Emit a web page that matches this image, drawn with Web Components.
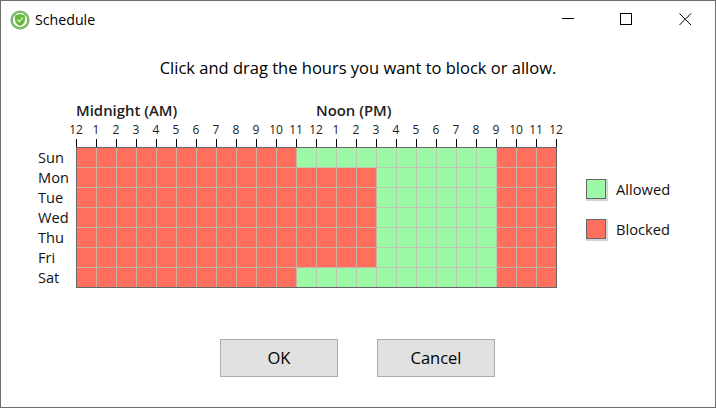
<!DOCTYPE html>
<html>
<head>
<meta charset="utf-8">
<title>Schedule</title>
<style>
html,body{margin:0;padding:0;background:#fff;}
body{font-family:"Open Sans","Noto Sans","Liberation Sans",sans-serif;color:#000;overflow:hidden;}
</style>
</head>
<body>
<sched-window caption="Schedule">
    <sched-grid></sched-grid>
    <dialog-button slot="buttons">OK</dialog-button>
    <dialog-button slot="buttons">Cancel</dialog-button>
</sched-window>

<script>
class WindowButton extends HTMLElement {
    constructor() {
        super();
        const icons = {
            min: '<path d="M0 5.5H12"/>',
            max: '<rect x="0.5" y="0.5" width="11" height="11"/>',
            close: '<path d="M0.5 0.5L12 12M12 0.5L0.5 12"/>'
        };
        this.attachShadow({ mode: 'open' }).innerHTML = `
        <style>
        :host{ display:flex; align-items:center; justify-content:center; width:58px; height:37px; }
        svg{ width:13px; height:13px; fill:none; stroke:#000; stroke-width:1; margin:0 0 1px 1px; }
        </style>
        <svg viewBox="0 0 13 13">${icons[this.getAttribute('kind')]}</svg>`;
    }
}
customElements.define('window-button', WindowButton);

class TitleBar extends HTMLElement {
    constructor() {
        super();
        this.attachShadow({ mode: 'open' }).innerHTML = `
        <style>
        :host{ display:flex; align-items:center; height:37px; padding-left:9px; }
        svg{ width:20px; height:20px; margin-right:5px; flex:none; }
        #caption{ flex:1; font-size:14.2px; line-height:37px; }
        #close{ margin-left:1px; margin-right:1px; }
        </style>
        <svg viewBox="0 0 20 20">
            <circle cx="10" cy="10" r="8.4" fill="#f4faf0" stroke="#7cb763" stroke-width="2.4"/>
            <path d="M10 3.9L15 5.5V9.4C15 12.5 12.8 14.8 10 16C7.2 14.8 5 12.5 5 9.4V5.5Z" fill="#66b83f"/>
            <path d="M7.3 9.6L9.4 11.6L12.8 7.6" fill="none" stroke="#dff2d4" stroke-width="1.3"/>
        </svg>
        <span id="caption"><slot></slot></span>
        <window-button kind="min"></window-button>
        <window-button kind="max"></window-button>
        <window-button kind="close" id="close"></window-button>`;
    }
}
customElements.define('title-bar', TitleBar);

class LegendItem extends HTMLElement {
    constructor() {
        super();
        this.attachShadow({ mode: 'open' }).innerHTML = `
        <style>
        :host{ display:flex; align-items:center; height:20px; font-size:14.7px; color:#111; }
        #swatch{ box-sizing:border-box; width:20px; height:20px; margin-right:10px; border:1px solid #666;
                 background:var(--swatch); box-shadow:1px 1px 0 1px #d4d4d4; }
        </style>
        <span id="swatch"></span><slot></slot>`;
    }
}
customElements.define('legend-item', LegendItem);

class DialogButton extends HTMLElement {
    constructor() {
        super();
        this.attachShadow({ mode: 'open' }).innerHTML = `
        <style>
        :host{ box-sizing:border-box; display:flex; align-items:center; justify-content:center;
               width:118px; height:38px; padding-bottom:2px; background:#e1e1e1; border:1px solid #adadad; font-size:16.5px; }
        </style>
        <slot></slot>`;
    }
}
customElements.define('dialog-button', DialogButton);

class SchedGrid extends HTMLElement {
    constructor() {
        super();
        const hours = [12,1,2,3,4,5,6,7,8,9,10,11,12,1,2,3,4,5,6,7,8,9,10,11,12];
        const days = ['Sun','Mon','Tue','Wed','Thu','Fri','Sat'];
        let cells = '';
        days.forEach((day, d) => {
            // weekdays stay blocked until 3pm, weekends open at 11am
            const open = (d === 0 || d === 6) ? 11 : 15;
            for (let h = 0; h < 24; h++) {
                const allowed = h >= open && h < 21;
                const cls = [allowed ? 'on' : 'off'];
                if (h < 23) cls.push('vl');
                if (d < 6) cls.push('hl');
                cells += `<i class="${cls.join(' ')}"></i>`;
            }
        });
        this.attachShadow({ mode: 'open' }).innerHTML = `
        <style>
        :host{ display:flex; padding-left:37px; --on:#9bf9a8; --off:#ff6f5e; --line:rgba(196,190,176,.85); }
        #days{ width:38px; padding-top:46px; font-size:14.6px; color:#111; }
        #days div{ height:20px; line-height:20px; }
        #main{ width:481px; }
        #periods{ display:grid; grid-template-columns:240px 241px; height:19px; line-height:19px;
                  font-size:14.9px; font-weight:600; color:#222; }
        #hours{ display:flex; margin-left:-10px; height:19px; line-height:19px; font-size:12px; color:#222; }
        #hours span{ flex:none; width:20px; text-align:center; }
        #ticks{ height:8px; background:repeating-linear-gradient(to right,#000 0 1px,transparent 1px 20px); }
        #cells{ display:grid; border:1px solid #666; grid-template-columns:repeat(23,20px) 19px;
                grid-template-rows:repeat(6,20px) 19px; }
        i{ display:block; background-repeat:no-repeat; }
        .on{ background-color:var(--on); }
        .off{ background-color:var(--off); }
        .vl{ background-image:linear-gradient(var(--line),var(--line)); background-position:right top; background-size:1px 100%; }
        .hl{ background-image:linear-gradient(var(--line),var(--line)); background-position:left bottom; background-size:100% 1px; }
        .vl.hl{ background-image:linear-gradient(var(--line),var(--line)),linear-gradient(var(--line),var(--line));
                background-position:right top,left bottom; background-size:1px 100%,100% 1px; }
        #legend{ display:flex; flex-direction:column; gap:20px; margin-left:29px; padding-top:78px; }
        </style>
        <div id="days">${days.map(d => `<div>${d}</div>`).join('')}</div>
        <div id="main">
            <div id="periods"><span>Midnight (AM)</span><span>Noon (PM)</span></div>
            <div id="hours">${hours.map(h => `<span>${h}</span>`).join('')}</div>
            <div id="ticks"></div>
            <div id="cells">${cells}</div>
        </div>
        <div id="legend">
            <legend-item style="--swatch:var(--on)">Allowed</legend-item>
            <legend-item style="--swatch:var(--off)">Blocked</legend-item>
        </div>`;
    }
}
customElements.define('sched-grid', SchedGrid);

class SchedWindow extends HTMLElement {
    constructor() {
        super();
        const caption = this.getAttribute('caption');
        this.attachShadow({ mode: 'open' }).innerHTML = `
        <style>
        :host{ box-sizing:border-box; display:flex; flex-direction:column; width:716px; height:408px;
               background:#fff; border:1px solid #6e6e6e; }
        h1{ margin:19px 0 22px; height:22px; line-height:22px; font-size:16.5px; font-weight:400; text-align:center; }
        #buttons{ display:flex; gap:39px; margin-top:51px; padding-left:219px; }
        </style>
        <title-bar>${caption}</title-bar>
        <h1>Click and drag the hours you want to block or allow.</h1>
        <slot></slot>
        <div id="buttons"><slot name="buttons"></slot></div>`;
    }
}
customElements.define('sched-window', SchedWindow);
</script>
</body>
</html>
